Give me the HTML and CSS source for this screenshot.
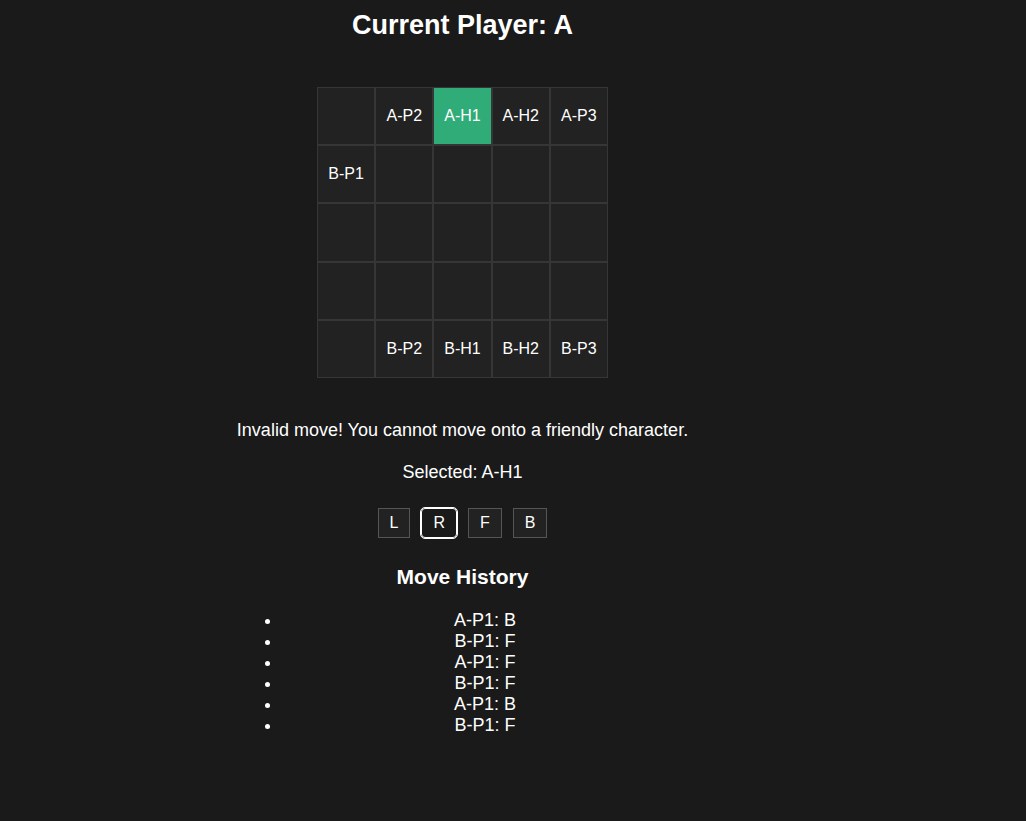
FILE: index.html
```html
<!DOCTYPE html>
<html>
<head>
<meta charset="utf-8">
<link rel="stylesheet" href="styles.css">
</head>
<body>
<div class="page">
  <div class="game">
    <h2 class="title">Current Player: A</h2>
    <div class="board">
      <div class="cell"></div>
      <div class="cell">A-P2</div>
      <div class="cell selected">A-H1</div>
      <div class="cell">A-H2</div>
      <div class="cell">A-P3</div>
      <div class="cell">B-P1</div>
      <div class="cell"></div>
      <div class="cell"></div>
      <div class="cell"></div>
      <div class="cell"></div>
      <div class="cell"></div>
      <div class="cell"></div>
      <div class="cell"></div>
      <div class="cell"></div>
      <div class="cell"></div>
      <div class="cell"></div>
      <div class="cell"></div>
      <div class="cell"></div>
      <div class="cell"></div>
      <div class="cell"></div>
      <div class="cell"></div>
      <div class="cell">B-P2</div>
      <div class="cell">B-H1</div>
      <div class="cell">B-H2</div>
      <div class="cell">B-P3</div>
    </div>
    <p class="message">Invalid move! You cannot move onto a friendly character.</p>
    <p class="selected-info">Selected: A-H1</p>
    <div class="controls">
      <button class="btn">L</button>
      <button class="btn focused">R</button>
      <button class="btn">F</button>
      <button class="btn">B</button>
    </div>
    <h3 class="history-title">Move History</h3>
    <ul class="history">
      <li>A-P1: B</li>
      <li>B-P1: F</li>
      <li>A-P1: F</li>
      <li>B-P1: F</li>
      <li>A-P1: B</li>
      <li>B-P1: F</li>
    </ul>
  </div>
</div>
</body>
</html>
```

FILE: styles.css
```css
html, body {
  margin: 0;
  padding: 0;
  background: #1a1a1a;
  color: #ffffff;
  font-family: "Liberation Sans", Arial, sans-serif;
  font-size: 18px;
}

.page {
  display: flex;
  justify-content: center;
  padding-right: 101px;
}

.game {
  display: flex;
  flex-direction: column;
  align-items: center;
}

.title {
  font-size: 27px;
  font-weight: bold;
  margin: 10px 0 0;
  line-height: 31px;
}

.board {
  margin-top: 46px;
  display: grid;
  grid-template-columns: repeat(5, 58.2px);
  grid-auto-rows: 58.2px;
}

.cell {
  box-sizing: border-box;
  border: 1px solid #363636;
  background: #222222;
  display: flex;
  align-items: center;
  justify-content: center;
  font-size: 16px;
  color: #ffffff;
}

.cell.selected {
  background: #30ac78;
}

.message {
  margin: 42px 0 0;
  line-height: 21px;
}

.selected-info {
  margin: 21px 0 0;
  line-height: 21px;
}

.controls {
  margin-top: 25px;
  display: flex;
  gap: 11px;
}

.btn {
  font-family: "Liberation Sans", Arial, sans-serif;
  font-size: 16px;
  line-height: 18px;
  color: #ffffff;
  background: #222222;
  border: 1px solid #555555;
  padding: 5px 11px;
  margin: 0;
  border-radius: 0;
}

.btn.focused {
  background: #1a1a1a;
  border-color: #ffffff;
  border-radius: 4px;
  outline: 1px solid #ffffff;
  outline-offset: 0;
}

.history-title {
  font-size: 21px;
  font-weight: bold;
  margin: 27px 0 0;
  line-height: 24px;
}

.history {
  align-self: stretch;
  margin: 21px 0 0;
  padding-left: 45px;
  list-style: disc;
}

.history li {
  text-align: center;
  line-height: 21px;
}
```
